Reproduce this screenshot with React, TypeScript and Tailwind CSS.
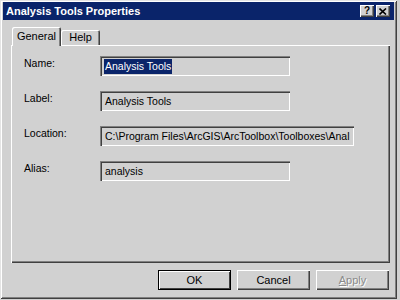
import React from 'react';

const font = { fontFamily: '"Liberation Sans", Arial, sans-serif' };

function Field({ value, wide, selected }: { value: string; wide?: boolean; selected?: boolean }) {
  return (
    <div
      className={`h-[20px] ${wide ? 'w-[254px]' : 'w-[190px]'} flex items-center pl-[4px] overflow-hidden whitespace-nowrap bg-[#d1d1d1] shadow-[inset_1px_1px_#808080,inset_2px_2px_#404040,inset_-1px_-1px_#ffffff,inset_-2px_-2px_#d1d1d1] text-[10.5px] text-black`}
    >
      {selected ? (
        <span className="bg-[#0a246a] text-white px-[1px] leading-[15px]">{value}</span>
      ) : (
        <span className="px-[1px] leading-[15px]">{value}</span>
      )}
    </div>
  );
}

function Button({ label, isDefault, disabled }: { label: string; isDefault?: boolean; disabled?: boolean }) {
  return (
    <div
      className={`w-[73px] h-[20px] flex items-center justify-center text-[11px] bg-[#d1d1d1] ${
        isDefault
          ? 'shadow-[inset_0_0_0_1px_#000000,inset_1px_1px_0_1px_#ffffff,inset_-1px_-1px_0_1px_#404040]'
          : 'shadow-[inset_1px_1px_#ffffff,inset_-1px_-1px_#404040,inset_-2px_-2px_#808080]'
      }`}
    >
      {disabled ? (
        <span className="text-[#8a8a8a] [text-shadow:1px_1px_0_#ffffff] underline-offset-1">
          <span className="underline">A</span>pply
        </span>
      ) : (
        <span className="text-black">{label}</span>
      )}
    </div>
  );
}

export default function App() {
  const rows = [
    { label: 'Name:', value: 'Analysis Tools', selected: true },
    { label: 'Label:', value: 'Analysis Tools' },
    { label: 'Location:', value: 'C:\\Program Files\\ArcGIS\\ArcToolbox\\Toolboxes\\Anal', wide: true },
    { label: 'Alias:', value: 'analysis' },
  ];

  return (
    <div className="w-[400px] h-[300px] bg-[#d1d1d1]" style={font}>
      <div className="w-[397px] h-[299px] flex flex-col pt-[2px] px-[3px] bg-[#d1d1d1] shadow-[inset_1px_1px_#e4e4e4,inset_-1px_-1px_#404040,inset_2px_2px_#ffffff,inset_-2px_-2px_#808080]">
        {/* Title bar */}
        <div className="h-[18px] bg-[#0a246a] flex items-center justify-between pl-[3px] pr-[4px]">
          <span className="text-white font-bold text-[11px] leading-none">Analysis Tools Properties</span>
          <div className="flex gap-[2px]">
            <div className="w-[14px] h-[12px] bg-[#d1d1d1] flex items-center justify-center text-[10px] font-bold leading-none text-black shadow-[inset_1px_1px_#ffffff,inset_-1px_-1px_#404040,inset_-2px_-2px_#808080]">
              ?
            </div>
            <div className="w-[14px] h-[12px] bg-[#d1d1d1] flex items-center justify-center shadow-[inset_1px_1px_#ffffff,inset_-1px_-1px_#404040,inset_-2px_-2px_#808080]">
              <svg width="8" height="7" viewBox="0 0 8 7">
                <path d="M0.5 0.5 L7 6.5 M7 0.5 L0.5 6.5" stroke="#000" strokeWidth="1.6" />
              </svg>
            </div>
          </div>
        </div>

        <div className="flex flex-col pl-[8px] pr-[4px] mt-[7px]">
          {/* Tabs */}
          <div className="h-[18px] flex items-end pl-[1px] relative z-10">
            <div className="w-[49px] h-[19px] -mb-[1px] bg-[#d1d1d1] flex items-center justify-center text-[11px] text-black shadow-[inset_1px_1px_#ffffff,inset_-1px_0_#404040,inset_-2px_0_#808080] rounded-t-[2px]">
              General
            </div>
            <div className="w-[39px] h-[15px] bg-[#d1d1d1] flex items-center justify-center text-[11px] text-black shadow-[inset_1px_1px_#ffffff,inset_-1px_0_#404040,inset_-2px_0_#808080] rounded-t-[2px]">
              Help
            </div>
          </div>

          {/* Panel */}
          <div className="h-[218px] bg-[#d1d1d1] shadow-[inset_1px_1px_#ffffff,inset_-1px_-1px_#404040,inset_-2px_-2px_#808080] flex flex-col gap-[15px] pt-[11px] pl-[13px]">
            {rows.map((r) => (
              <div key={r.label} className="flex items-start">
                <div className="w-[76px] text-[10.5px] leading-[14px] text-black">{r.label}</div>
                <Field value={r.value} wide={r.wide} selected={r.selected} />
              </div>
            ))}
          </div>

          {/* Buttons */}
          <div className="flex justify-end gap-[6px] mt-[7px] mr-[1px]">
            <Button label="OK" isDefault />
            <Button label="Cancel" />
            <Button label="Apply" disabled />
          </div>
        </div>
      </div>
    </div>
  );
}
